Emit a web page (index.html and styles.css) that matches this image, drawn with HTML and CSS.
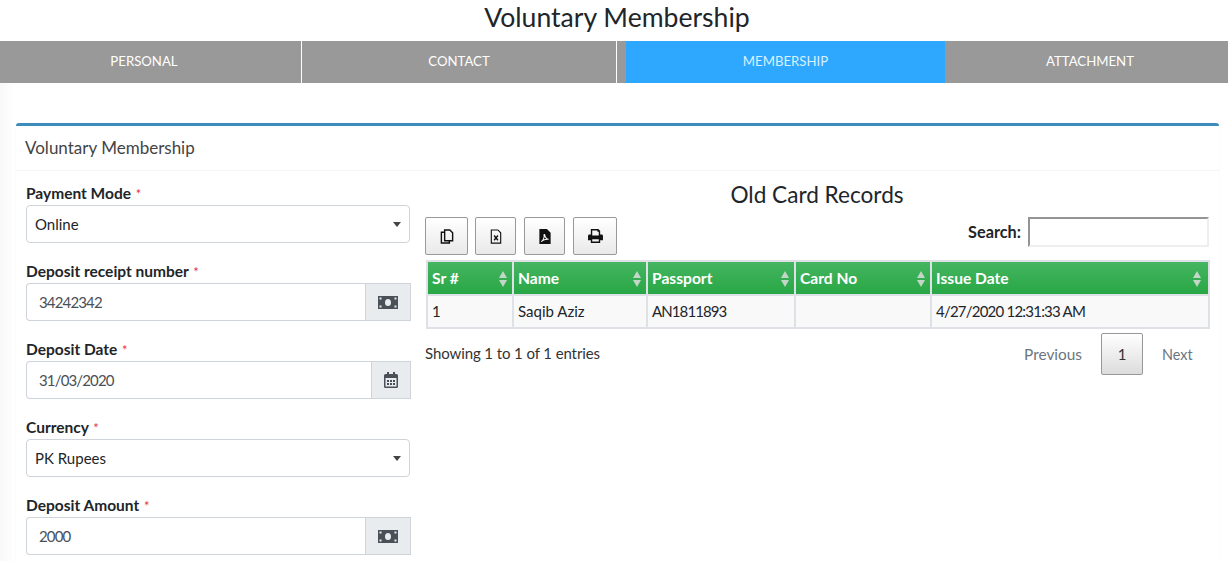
FILE: index.html
```html
<!DOCTYPE html>
<html lang="en">
<head>
<meta charset="utf-8">
<title>Voluntary Membership</title>
<link rel="stylesheet" href="styles.css">
</head>
<body>
<h1 class="page-title">Voluntary Membership</h1>
<nav class="tabs">
  <a class="tab tab-personal">PERSONAL</a>
  <a class="tab tab-contact">CONTACT</a>
  <span class="tab-gap"></span>
  <a class="tab tab-membership active">MEMBERSHIP</a>
  <a class="tab tab-attachment">ATTACHMENT</a>
</nav>
<main class="content">
  <section class="card">
    <header class="card-header">Voluntary Membership</header>
    <div class="card-body">
      <form class="form-col">
        <div class="field">
          <label class="field-label">Payment Mode <span class="req">*</span></label>
          <div class="select"><span>Online</span><i class="caret"></i></div>
        </div>
        <div class="field">
          <label class="field-label">Deposit receipt number <span class="req">*</span></label>
          <div class="input-group">
            <div class="input-value">34242342</div>
            <div class="addon">
              <svg class="ico-money" viewBox="0 0 20 13"><path fill="#495057" fill-rule="evenodd" d="M0 0h20v13H0zM10 3a3 3.500 0 1 0 0 7 3 3.500 0 1 0 0-7zM1.500 1.500v2h2v-2zM16.500 1.500v2h2v-2zM1.500 9.500v2h2v-2zM16.500 9.500v2h2v-2z"/></svg>
            </div>
          </div>
        </div>
        <div class="field">
          <label class="field-label">Deposit Date <span class="req">*</span></label>
          <div class="input-group">
            <div class="input-value">31/03/2020</div>
            <div class="addon addon-narrow">
              <svg class="ico-cal" viewBox="0 0 14 16"><path fill="#495057" fill-rule="evenodd" d="M3 0h2v2h4V0h2v2h1.500A1.500 1.500 0 0 1 14 3.500v11a1.500 1.500 0 0 1-1.500 1.500h-11A1.500 1.500 0 0 1 0 14.500v-11A1.500 1.500 0 0 1 1.500 2H3zM1.500 6v8.500h11V6zM3 8h2v2H3zM6 8h2v2H6zM9 8h2v2H9zM3 11h2v2H3zM6 11h2v2H6zM9 11h2v2H9z"/></svg>
            </div>
          </div>
        </div>
        <div class="field">
          <label class="field-label">Currency <span class="req">*</span></label>
          <div class="select"><span>PK Rupees</span><i class="caret"></i></div>
        </div>
        <div class="field">
          <label class="field-label">Deposit Amount <span class="req">*</span></label>
          <div class="input-group">
            <div class="input-value">2000</div>
            <div class="addon">
              <svg class="ico-money" viewBox="0 0 20 13"><path fill="#495057" fill-rule="evenodd" d="M0 0h20v13H0zM10 3a3 3.500 0 1 0 0 7 3 3.500 0 1 0 0-7zM1.500 1.500v2h2v-2zM16.500 1.500v2h2v-2zM1.500 9.500v2h2v-2zM16.500 9.500v2h2v-2z"/></svg>
            </div>
          </div>
        </div>
      </form>
      <div class="records">
        <h2 class="records-title">Old Card Records</h2>
        <div class="toolbar">
          <div class="buttons">
            <button type="button" class="btn btn-copy"><svg class="ico" viewBox="0 0 14 16"><path fill="none" stroke="#111" stroke-width="1.500" d="M4.500 1h5.500l3 3v8.500H4.500zM4.500 3.500H1V15h8.500v-2.500"/></svg></button>
            <button type="button" class="btn btn-excel"><svg class="ico" viewBox="0 0 12 16"><path fill="none" stroke="#111" stroke-width="1.200" d="M1 1h7l3 3v11H1z"/><path fill="none" stroke="#111" stroke-width="1.500" d="M4 7l4 5M8 7l-4 5"/></svg></button>
            <button type="button" class="btn btn-pdf"><svg class="ico" viewBox="0 0 12 16"><path fill="#111" d="M0 0h8l4 4v12H0z"/><path fill="none" stroke="#fff" stroke-width="1.100" d="M2 13.500c2-1 3.500-4.500 3-7-.3-1 .8-1 .8 0 0 2 2 4.500 4 4.500-1.500-.5-5.500.5-7.800 2.500z"/></svg></button>
            <button type="button" class="btn btn-print"><svg class="ico-print" viewBox="0 0 16 15"><path fill="#111" fill-rule="evenodd" d="M3 0h8l2 2v4h1.500A1.500 1.500 0 0 1 16 7.500V12h-3v3H3v-3H0V7.500A1.500 1.500 0 0 1 1.500 6H3zM4.500 1.500V7h7V3h-1.500V1.500zM4.500 11v2.500h7V11z"/></svg></button>
          </div>
          <div class="search"><label class="search-label">Search:</label><div class="search-input"></div></div>
        </div>
        <table class="records-table">
          <thead>
            <tr>
              <th class="col-sr">Sr #<i class="sort"></i></th>
              <th class="col-name">Name<i class="sort"></i></th>
              <th class="col-pass">Passport<i class="sort"></i></th>
              <th class="col-card">Card No<i class="sort"></i></th>
              <th class="col-date">Issue Date<i class="sort"></i></th>
            </tr>
          </thead>
          <tbody>
            <tr>
              <td>1</td><td>Saqib Aziz</td><td class="cell-num">AN1811893</td><td></td><td class="cell-date">4/27/2020 12:31:33 AM</td>
            </tr>
          </tbody>
        </table>
        <div class="table-foot">
          <div class="info">Showing 1 to 1 of 1 entries</div>
          <div class="pager">
            <span class="page-link page-prev">Previous</span>
            <span class="page-current">1</span>
            <span class="page-link page-next">Next</span>
          </div>
        </div>
      </div>
    </div>
  </section>
</main>
</body>
</html>
```
FILE: styles.css
```css
* { box-sizing: border-box; }
html, body { margin: 0; height: 561px; overflow: hidden; }
body { background: #fff; font-family: "Lato", "Liberation Sans", sans-serif; font-size: 15px; color: #212529; }
.page-title { margin: 0; height: 41px; padding-left: 6px; line-height: 34px; text-align: center; font-size: 26.6px; font-weight: 400; color: #212529; }
.tabs { display: flex; height: 42px; background: #999; }
.tab { display: flex; align-items: center; justify-content: center; color: #fff; font-size: 13.2px; line-height: 40px; padding-bottom: 2px; background: #999; }
.tab-personal { width: 302px; border-right: 1px solid #fff; padding-right: 13px; }
.tab-contact { width: 315px; border-right: 1px solid #fff; }
.tab-gap { width: 9px; }
.tab-membership { width: 319px; }
.tab-attachment { width: 283px; padding-left: 7px; }
.tab.active { background: #2ea8ff; color: #d8f0ff; }
.content { padding: 40px 9px 0 16px; background: linear-gradient(90deg, #f8f8f8, #fff 14px); height: 478px; }
.card { background: #fff; border-top: 3px solid #3c8dbc; border-radius: 3px 3px 0 0; box-shadow: 0 0 1px rgba(0,0,0,.12); height: 440px; }
.card-header { height: 45px; line-height: 43px; padding-left: 9px; font-size: 17px; color: #444; border-bottom: 1px solid #f4f4f4; }
.card-body { display: grid; grid-template-columns: 385px 784px; column-gap: 14px; padding: 13px 0 0 10px; }
.form-col { display: flex; flex-direction: column; }
.field { height: 78px; }
.field-label { display: block; height: 21px; line-height: 19px; font-size: 15.5px; font-weight: 700; color: #212529; }
.req { color: #dc3545; font-weight: 400; margin-left: 1px; font-size: 13px; }
.select { width: 384px; height: 38px; border: 1px solid #ced4da; border-radius: 4px; padding: 0 8px; display: flex; align-items: center; justify-content: space-between; color: #212529; background: #fff; }
.caret { width: 0; height: 0; border-left: 4px solid transparent; border-right: 4px solid transparent; border-top: 5px solid #444; }
.input-group { display: flex; width: 385px; height: 38px; }
.input-value { flex: 1; border: 1px solid #ced4da; border-right: 0; border-radius: 4px 0 0 4px; padding: 0 12px; line-height: 37px; color: #495057; letter-spacing: -.85px; }
.addon { width: 46px; display: flex; align-items: center; justify-content: center; background: #e9ecef; border: 1px solid #ced4da; }
.addon-narrow { width: 40px; }
.ico-money { width: 20px; height: 13px; }
.ico-cal { width: 14px; height: 16px; }
.records { display: flex; flex-direction: column; }
.records-title { margin: 0; height: 33px; line-height: 22px; text-align: center; font-size: 22.6px; font-weight: 400; color: #212529; }
.toolbar { display: flex; justify-content: space-between; align-items: flex-start; height: 43px; }
.buttons { display: flex; gap: 7px; }
.btn { height: 38px; width: 41px; padding: 0; display: flex; align-items: center; justify-content: center; border: 1px solid #999; border-radius: 2px; background: linear-gradient(#fff, #e9e9e9); }
.btn-copy { width: 43px; }
.btn-excel { margin-right: 1px; }
.btn-print { width: 44px; margin-left: 1px; }
.ico { height: 15px; width: 14px; }
.ico-print { height: 14px; width: 15px; }
.search { display: flex; align-items: flex-start; gap: 7px; height: 30px; }
.search-label { font-weight: 700; font-size: 16.3px; line-height: 30px; }
.search-input { width: 181px; height: 30px; border: 2px solid; border-color: #949494 #eee #eee #949494; background: #fff; }
.records-table { width: 782px; margin-left: 1px; border-collapse: collapse; table-layout: fixed; font-size: 15px; background: #f9f9f9; }
.records-table th, .records-table td { border: 2px solid #dee2e6; padding: 0 4px; text-align: left; }
.records-table th { position: relative; height: 34px; color: #fff; font-weight: 700; font-size: 15.6px; background: linear-gradient(#45b561, #28a745); border-bottom: 1px solid #111; }
.records-table td { height: 33px; padding-bottom: 2px; color: #212529; }
.records-table .cell-num { letter-spacing: -.9px; }
.records-table .cell-date { letter-spacing: -.78px; }
.col-sr { width: 86px; }
.col-name { width: 134px; }
.col-pass { width: 148px; }
.col-card { width: 136px; }
.col-date { width: 278px; }
.sort { position: absolute; right: 4px; top: 9px; width: 9px; height: 16px; }
.col-date .sort { right: 6px; }
.sort::before, .sort::after { content: ""; position: absolute; left: 0; border-left: 4.5px solid transparent; border-right: 4.5px solid transparent; }
.sort::before { top: 0; border-bottom: 7px solid #c3d6c8; }
.sort::after { bottom: 0; border-top: 7px solid #c3d6c8; }
.table-foot { display: flex; justify-content: space-between; align-items: flex-start; margin-top: 4px; }
.info { margin-top: 11px; font-size: 15px; letter-spacing: -.1px; color: #333; }
.pager { display: flex; align-items: center; height: 42px; }
.page-link { color: #6c757d; font-size: 15px; }
.page-prev { padding-right: 19px; font-size: 15.4px; }
.page-next { width: 66px; padding-left: 19px; font-size: 14.4px; }
.page-current { width: 42px; height: 42px; display: flex; align-items: center; justify-content: center; border: 1px solid #979797; border-radius: 2px; background: linear-gradient(#fff, #dcdcdc); color: #333; font-size: 15px; }
```
